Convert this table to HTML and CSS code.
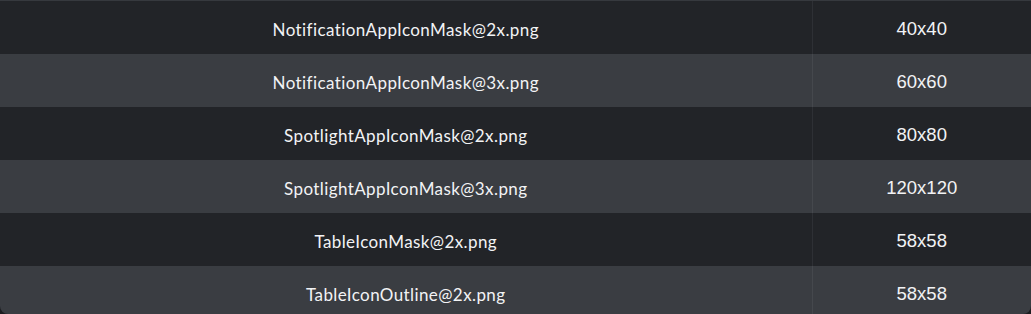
FILE: index.html
```html
<!DOCTYPE html>
<html>
<head>
<meta charset="utf-8">
<link rel="stylesheet" href="styles.css">
</head>
<body>
<div class="wrap">
  <table class="grid">
    <tbody>
      <tr class="dark"><td class="name">NotificationAppIconMask@2x.png</td><td class="size">40x40</td></tr>
      <tr class="light"><td class="name">NotificationAppIconMask@3x.png</td><td class="size">60x60</td></tr>
      <tr class="dark"><td class="name">SpotlightAppIconMask@2x.png</td><td class="size">80x80</td></tr>
      <tr class="light"><td class="name">SpotlightAppIconMask@3x.png</td><td class="size">120x120</td></tr>
      <tr class="dark"><td class="name">TableIconMask@2x.png</td><td class="size">58x58</td></tr>
      <tr class="light"><td class="name">TableIconOutline@2x.png</td><td class="size">58x58</td></tr>
    </tbody>
  </table>
</div>
</body>
</html>
```

FILE: styles.css
```css
html, body {
  margin: 0;
  padding: 0;
  background: #1c1d20;
}
.wrap {
  width: 1031px;
  height: 314px;
  border-top: 1px solid #36393e;
  border-radius: 0 0 8px 8px;
  overflow: hidden;
  box-sizing: border-box;
}
.grid {
  width: 100%;
  border-collapse: collapse;
  table-layout: fixed;
  color: #f2f3f5;
}
.grid td {
  height: 53px;
  padding: 3px 0 0 0;
  box-sizing: border-box;
  text-align: center;
  vertical-align: middle;
}
.name {
  width: 812px;
  font-family: Lato, "Open Sans", sans-serif;
  font-size: 17px;
  letter-spacing: 0.4px;
  border-right: 1px solid #2e3035;
}
.light .name {
  border-right-color: #45484d;
}
.size {
  font-family: "Liberation Sans", Arial, sans-serif;
  font-size: 18.5px;
}
.dark td { background: #222428; }
.light td { background: #3a3d42; }
```
